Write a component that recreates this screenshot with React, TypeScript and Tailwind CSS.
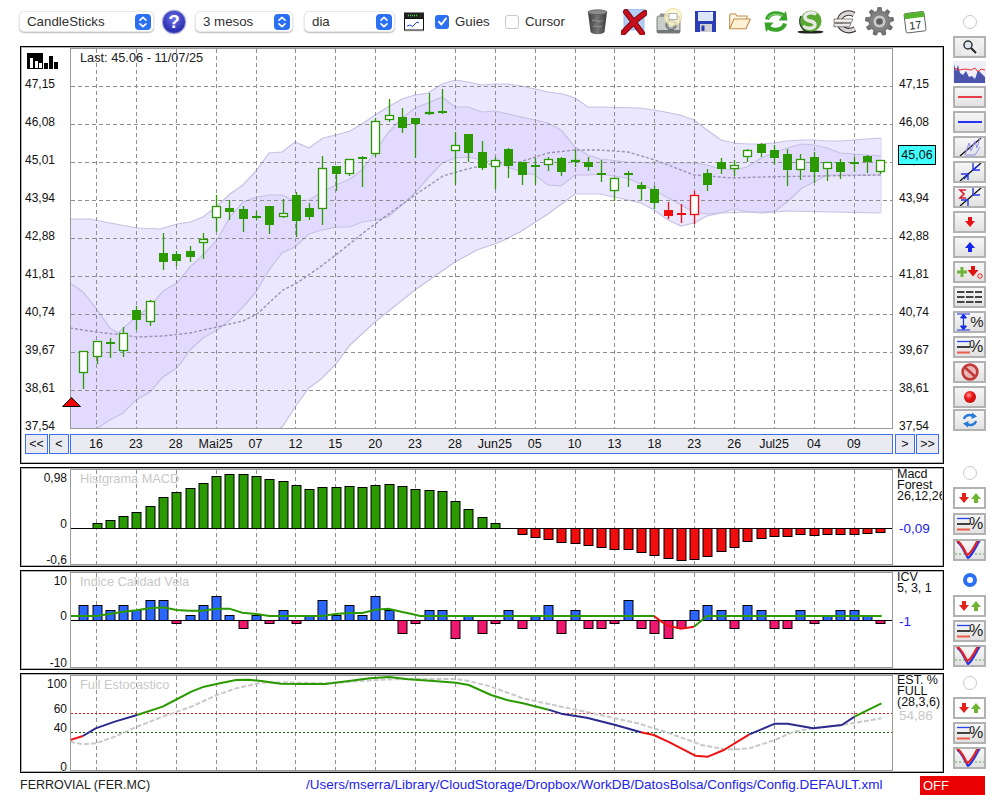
import React from "react";

type P = [number, number];
const pts = (a: P[]) => a.map((p) => `${p[0]},${p[1]}`).join(" ");
const GX = [96, 136, 176, 216, 256, 295, 335, 375, 415, 455, 495, 535, 575, 614, 654, 694, 734, 774, 814, 854];
const GY = [86, 124, 162, 200, 238, 276, 314, 352, 390];
const cx = (i: number) => 83.3 + 13.28 * i;
const GREEN = "#2a9a00";
const RED = "#f20d0d";

const aUp: P[] = [[70,219],[90,219],[110,223],[137,228],[160,229],[177,224],[190,222],[203,217],[217,206],[230,194],[243,185],[256,171],[269,153],[282,152],[295,142],[309,148],[323,138],[336,135],[350,131],[362,124],[375,115],[388,107],[402,99],[415,95],[428,93],[442,84],[455,80],[468,82],[482,85],[495,84],[508,84],[521,86],[535,89],[548,92],[563,94],[575,98],[588,107],[600,107],[640,108],[660,111],[680,115],[694,120],[707,130],[721,140],[734,143],[747,144],[761,144],[774,143],[787,141],[802,140],[814,140],[827,141],[840,141],[854,140],[867,139],[881,138]];
const aLo: P[] = [[70,445],[270,435],[283,426],[295,407],[309,388],[320,380],[335,365],[350,345],[375,322],[415,290],[455,262],[477,250],[500,242],[520,232],[548,214],[575,194],[600,194],[614,197],[628,200],[641,203],[654,210],[668,220],[681,226],[694,223],[707,216],[721,213],[734,209],[747,212],[761,213],[774,212],[787,211],[881,213]];
const bUp: P[] = [[70,283],[83,292],[96,308],[110,328],[118,333],[136,317],[150,307],[163,291],[177,283],[190,267],[203,255],[217,240],[230,217],[243,202],[257,197],[269,195],[282,195],[295,201],[309,200],[322,192],[336,185],[350,179],[362,170],[375,152],[388,133],[402,118],[415,108],[428,103],[442,97],[455,107],[468,107],[482,112],[495,111],[508,114],[521,117],[535,120],[548,123],[561,130],[575,147],[588,155],[600,159],[627,162],[655,163],[694,163],[707,165],[721,169],[734,170],[747,167],[761,158],[774,153],[787,148],[802,144],[814,145],[827,148],[840,153],[854,154],[867,155],[881,156]];
const bLo: P[] = [[70,445],[96,429],[110,420],[123,413],[136,400],[150,392],[163,377],[177,368],[190,350],[203,338],[217,330],[230,320],[243,307],[256,292],[269,270],[282,253],[295,247],[309,234],[322,230],[336,227],[350,227],[362,222],[375,220],[388,217],[402,205],[415,193],[428,178],[442,163],[455,158],[468,157],[482,160],[495,162],[508,167],[521,172],[535,175],[548,185],[561,186],[575,175],[588,175],[600,174],[627,178],[654,190],[681,205],[694,212],[707,214],[721,213],[747,212],[774,212],[787,202],[802,188],[814,182],[827,175],[881,175]];
const mean: P[] = [[70,328],[96,332],[123,335],[137,337],[163,336],[190,333],[217,327],[243,321],[257,314],[283,290],[297,283],[320,267],[342,250],[367,230],[390,213],[415,195],[443,176],[467,169],[495,163],[520,162],[548,153],[575,150],[600,150],[628,152],[655,160],[694,175],[733,178],[760,177],[881,175]];

// wickTop, bodyTop, bodyBottom, wickBottom, hollow
const C: [number, number, number, number, number][] = [
[351,351,373,389,1],[341,341,357,364,1],[338,342,344,358,0],[327,333,351,357,1],[306,310,320,330,0],[300,301,322,326,1],[233,253,262,270,0],[251,254,261,266,0],[246,251,257,262,0],[233,239,243,259,1],
[195,206,218,232,1],[200,208,212,220,0],[206,209,219,232,0],[211,216,218,220,0],[206,206,225,234,0],[199,213,217,218,1],[192,195,221,237,0],[203,208,217,220,0],[156,168,209,225,1],[166,166,174,191,0],
[159,159,174,176,1],[156,157,159,187,0],[118,121,154,157,1],[99,115,120,122,1],[108,117,128,133,0],[118,118,124,158,0],[93,112,114,115,1],[89,111,113,114,0],[132,145,151,185,1],[134,134,153,162,0],
[141,152,168,170,0],[157,160,167,189,1],[148,149,166,178,0],[162,162,175,185,0],[158,165,167,185,0],[157,159,165,171,1],[157,158,172,176,0],[150,160,162,167,1],[157,162,167,171,0],[160,173,175,182,0],
[178,178,191,201,1],[171,173,175,187,0],[182,185,189,200,0],[186,189,203,209,0],[202,210,216,219,0],[204,213,215,223,0],[191,195,215,224,1],[169,173,185,191,0],[158,162,169,174,0],[160,165,169,176,1],
[149,150,157,162,1],[143,144,153,157,0],[145,150,158,165,0],[149,154,170,186,0],[154,159,170,180,1],[152,157,172,183,0],[162,162,169,181,1],[159,162,172,179,0],[157,162,164,172,0],[155,156,162,173,0],
[160,160,172,174,1],
];

const macdPos: number[] = [175,166,154,142,124,97,82,70,55,34,28,28,34,43,49,61,73,67,67,64,67,61,58,64,73];
const macdPos2: [number, number][] = [[26,490],[27,491],[28,501],[29,509],[30,517],[31,523]];
const macdNeg: number[] = [208,217,223,232,235,241,247,253,253,262,271,280,286,283,274,259,247,229,220,214,214,208,211,208,208,208,205,202];

// ICV bars as zoomed y: below 466 = blue top, above = pink bottom
const icv: number[] = [421,421,436,421,436,406,406,475,451,421,394,451,490,451,475,436,475,451,406,451,421,451,394,436,505,475,436,436,520,451,505,475,436,490,451,421,505,436,490,490,475,406,490,505,520,490,436,421,436,490,421,436,490,490,436,475,451,436,436,451,475];

const sigAll: P[] = [[151,453],[229,453],[268,447],[310,440],[349,436],[388,430],[430,427],[469,435],[508,437],[547,437],[589,431],[628,431],[667,443],[709,447],[748,453],[907,453],[946,447],[988,444],[1027,444],[1066,434],[1105,431],[1147,441],[1186,449],[1200,453]].map(([x, y]) => [x / 3 + 20, 465 + y / 3] as P);
const z11 = (a: P[]) => a.map(([x, y]) => [x / 3 + 500, 465 + y / 3] as P);
const z12 = (a: P[]) => a.map(([x, y]) => [x / 1.568, 665 + y / 3] as P);

const St = {
  r1: [[110,225],[130,213]] as P[],
  b1: [[130,213],[150,190],[180,170],[215,150]] as P[],
  g1: [[215,150],[255,125],[275,105],[300,80],[320,65],[345,55],[370,45],[390,44],[410,48],[440,56],[470,57],[510,57],[550,47],[580,40],[610,36],[640,43],[680,48],[715,53],[735,60],[770,90],[795,105],[820,115],[860,134]] as P[],
  b2: [[860,134],[880,146],[920,158],[965,180],[1005,202]] as P[],
  r2: [[1005,202],[1025,210],[1050,232],[1090,272],[1110,275],[1135,255],[1175,208]] as P[],
  b3: [[1175,208],[1215,176],[1235,176],[1275,190],[1320,180],[1340,155]] as P[],
  g2: [[1340,155],[1382,115]] as P[],
  gray: [[110,230],[130,238],[150,235],[180,215],[215,185],[255,155],[300,125],[340,90],[370,70],[410,53],[450,52],[510,55],[550,50],[600,44],[640,42],[715,42],[735,48],[770,65],[820,100],[880,125],[930,145],[1000,175],[1050,205],[1100,240],[1140,254],[1175,250],[1215,225],[1245,200],[1275,190],[1320,180],[1382,160]] as P[],
};

const VGrid = ({ y1, y2 }: { y1: number; y2: number }) => (
  <>
    {GX.map((x) => (
      <line key={x} x1={x + 0.5} x2={x + 0.5} y1={y1} y2={y2} stroke="#8f8f8f" strokeWidth="1" strokeDasharray="4 3" />
    ))}
  </>
);

const MainChart = () => (
  <svg width="821" height="379" viewBox="71 49 821 379" className="block overflow-hidden">
    <polygon points={pts([...aUp, ...[...aLo].reverse()])} fill="#7b5cff" fillOpacity="0.15" />
    <polygon points={pts([...bUp, ...[...bLo].reverse()])} fill="#7b5cff" fillOpacity="0.08" />
    {[aUp, aLo, bUp, bLo].map((l, i) => (
      <polyline key={i} points={pts(l)} fill="none" stroke="#c6c1e3" strokeWidth="1.2" />
    ))}
    <line x1="881" x2="881" y1="138" y2="213" stroke="#d6d2ee" strokeWidth="1" />
    <VGrid y1={49} y2={428} />
    {GY.map((y) => (
      <line key={y} x1={71} x2={892} y1={y + 0.5} y2={y + 0.5} stroke="#8f8f8f" strokeWidth="1" strokeDasharray="4 3" />
    ))}
    <polyline points={pts(mean)} fill="none" stroke="#9c93ae" strokeWidth="1.4" strokeDasharray="3 2" />
    {C.map((c, i) => {
      const x = Math.round(cx(i)) + 0.5;
      const col = i >= 44 && i <= 46 ? RED : GREEN;
      return (
        <g key={i}>
          <line x1={x} x2={x} y1={c[0]} y2={c[3]} stroke={col} strokeWidth="1.3" />
          {c[4] ? (
            <rect x={x - 4} y={c[1] + 0.5} width={8} height={c[2] - c[1] - 1} fill="#fff" stroke={col} strokeWidth="1.3" />
          ) : (
            <rect x={x - 4.5} y={c[1]} width={9} height={c[2] - c[1]} fill={col} />
          )}
        </g>
      );
    })}
  </svg>
);

const Bar = ({ x, y1, y2, fill }: { x: number; y1: number; y2: number; fill: string }) => (
  <rect x={Math.round(x) - 4} y={y1 + 0.5} width={9} height={y2 - y1} fill={fill} stroke="#000" strokeWidth="1" />
);

const MacdChart = () => (
  <svg width="821" height="94" viewBox="71 470 821 94" className="block">
    <VGrid y1={470} y2={564} />
    {macdPos.map((z, i) => (
      <Bar key={i} x={cx(i + 1)} y1={Math.round(465 + z / 3)} y2={528} fill={GREEN} />
    ))}
    {macdPos2.map(([i, y]) => (
      <Bar key={i} x={cx(i)} y1={y} y2={528} fill={GREEN} />
    ))}
    {macdNeg.map((z, i) => (
      <Bar key={i} x={cx(i + 33)} y1={528} y2={Math.round(465 + z / 3)} fill={RED} />
    ))}
    <line x1="71" x2="892" y1="528.5" y2="528.5" stroke="#000" strokeWidth="1" />
  </svg>
);

const IcvChart = () => (
  <svg width="821" height="94" viewBox="71 573 821 94" className="block">
    <VGrid y1={573} y2={667} />
    {icv.map((z, i) => {
      const y = Math.round(465 + z / 3);
      return y < 620 ? (
        <Bar key={i} x={cx(i)} y1={y} y2={620} fill="#2a66ff" />
      ) : (
        <Bar key={i} x={cx(i)} y1={620} y2={y} fill="#f0176f" />
      );
    })}
    <line x1="71" x2="892" y1="620.5" y2="620.5" stroke="#000" strokeWidth="1" />
    <polyline points={pts([...sigAll, ...z11([[0,453],[462,453]])])} fill="none" stroke={GREEN} strokeWidth="2" />
    <polyline points={pts(z11([[462,453],[483,469],[504,482],[543,491],[582,485]]))} fill="none" stroke="#ee1111" strokeWidth="2" />
    <polyline points={pts(z11([[582,485],[621,453],[1145,453]]))} fill="none" stroke={GREEN} strokeWidth="2" />
  </svg>
);

const StochChart = () => (
  <svg width="821" height="94" viewBox="71 676 821 94" className="block">
    <VGrid y1={676} y2={770} />
    <line x1="71" x2="892" y1="713.5" y2="713.5" stroke="#e01010" strokeWidth="1" strokeDasharray="2 2" />
    <line x1="71" x2="892" y1="732.5" y2="732.5" stroke="#0c6a0c" strokeWidth="1" strokeDasharray="2 2" />
    <polyline points={pts(z12(St.gray))} fill="none" stroke="#c9c9c9" strokeWidth="2" strokeDasharray="5 2" />
    {([["r1", "#ee1111"], ["b1", "#2b2a8e"], ["g1", GREEN], ["b2", "#2b2a8e"], ["r2", "#ee1111"], ["b3", "#2b2a8e"], ["g2", GREEN]] as const).map(([k, col]) => (
      <polyline key={k} points={pts(z12(St[k]))} fill="none" stroke={col} strokeWidth="2" strokeLinejoin="round" />
    ))}
  </svg>
);

/* ---------- toolbar bits ---------- */
const Stepper = () => (
  <div className="w-[16px] h-[16px] rounded-[4px] bg-[#2b6ff2] flex items-center justify-center">
    <svg width="10" height="14" viewBox="0 0 10 14" fill="none" stroke="#fff" strokeWidth="1.6" strokeLinecap="round" strokeLinejoin="round">
      <path d="M2 5.2 5 2.4l3 2.8" />
      <path d="M2 8.8l3 2.8 3-2.8" />
    </svg>
  </div>
);

const Select = ({ label, w, ml }: { label: string; w: string; ml: string }) => (
  <div className={`${w} ${ml} h-[21px] bg-white rounded-[5px] border border-[#e8e8e8] shadow-[0_1px_1.5px_rgba(0,0,0,0.28)] flex items-center justify-between pl-[7px] pr-[2px] shrink-0`}>
    <span className="text-[13.3px] text-[#303030] leading-none">{label}</span>
    <Stepper />
  </div>
);

const Check = ({ on }: { on: boolean }) =>
  on ? (
    <div className="w-[14px] h-[14px] rounded-[3px] bg-[#2b6ff2] flex items-center justify-center shrink-0">
      <svg width="11" height="11" viewBox="0 0 11 11" fill="none" stroke="#fff" strokeWidth="1.9" strokeLinecap="round" strokeLinejoin="round">
        <path d="M2 5.8l2.4 2.7L9 2.4" />
      </svg>
    </div>
  ) : (
    <div className="w-[14px] h-[14px] rounded-[3px] bg-white border border-[#c9c9c9] shrink-0" />
  );

const gearPath = (() => {
  const c = 14.5;
  const n = 9;
  let d = "";
  for (let i = 0; i < n; i++) {
    const a = (i * 2 * Math.PI) / n;
    const s = (2 * Math.PI) / n;
    const pr = (r: number, t: number) => `${(c + r * Math.sin(t)).toFixed(2)} ${(c - r * Math.cos(t)).toFixed(2)}`;
    d += `${i ? "L" : "M"}${pr(10.5, a - s * 0.32)} L${pr(14.2, a - s * 0.17)} L${pr(14.2, a + s * 0.17)} L${pr(10.5, a + s * 0.32)} `;
  }
  return d + "Z";
})();

const Trash = () => (
  <svg width="21" height="26" viewBox="0 0 21 26" className="ml-[20px] shrink-0">
    <defs>
      <linearGradient id="tg" x1="0" x2="1" y1="0" y2="0">
        <stop offset="0" stopColor="#3c3c3c" />
        <stop offset="0.5" stopColor="#777" />
        <stop offset="1" stopColor="#3a3a3a" />
      </linearGradient>
    </defs>
    <path d="M1 3 C5 0.5 16 0.5 20 3 L17.5 23 C15 26 6 26 3.5 23 Z" fill="url(#tg)" />
    <ellipse cx="10.5" cy="3.2" rx="9.5" ry="2.4" fill="#8c8c8c" stroke="#555" strokeWidth="0.7" />
    <path d="M5 12 C8 9 13 15 16 11 M6 18 C9 15 12 20 15 17" stroke="#9a9a9a" strokeWidth="1" fill="none" />
  </svg>
);

const XIcon = () => (
  <svg width="26" height="26" viewBox="0 0 26 26" className="ml-[13px] shrink-0">
    <rect x="3" y="0" width="20" height="21" fill="#b4cdf5" stroke="#8fb0e6" strokeWidth="0.8" />
    <path d="M5 3 C9 8 14 15 21 24 M24 4 C17 9 10 15 2 24" stroke="#8a0a14" strokeWidth="6" strokeLinecap="round" fill="none" />
    <path d="M5 3 C9 8 14 15 21 24 M24 4 C17 9 10 15 2 24" stroke="#c80f1d" strokeWidth="3.6" strokeLinecap="round" fill="none" />
  </svg>
);

const Camera = () => (
  <svg width="27" height="27" viewBox="0 0 27 27" className="ml-[9px] shrink-0">
    <rect x="1" y="8" width="23" height="17" rx="1.5" fill="#c9cdc9" stroke="#666" strokeWidth="0.8" />
    <rect x="4" y="5.5" width="8" height="3" fill="#8d8d8d" />
    <rect x="1" y="22" width="23" height="3" fill="#6f7a78" />
    <circle cx="15" cy="17" r="5" fill="#9aa09c" stroke="#555" strokeWidth="1" />
    <circle cx="15" cy="17" r="2.4" fill="#dfe4e0" />
    <circle cx="17" cy="9" r="8.5" fill="#fff6c8" fillOpacity="0.75" stroke="#e6e0a2" strokeWidth="1" />
    <rect x="13" y="5.5" width="8" height="6" fill="#fff" stroke="#888" strokeWidth="0.6" />
  </svg>
);

const Floppy = () => (
  <svg width="21" height="21" viewBox="0 0 21 21" className="ml-[12px] shrink-0">
    <path d="M0 0H21V21H0Z" fill="#2a3db5" />
    <rect x="3" y="1" width="15" height="9" fill="#dbe6f8" />
    <rect x="16" y="1" width="2" height="2" fill="#fff" />
    <rect x="5" y="13" width="12" height="8" fill="#d0d0d4" />
    <rect x="6.5" y="14.5" width="3" height="5.5" fill="#2a3db5" />
  </svg>
);

const Folder = () => (
  <svg width="22" height="17" viewBox="0 0 22 17" className="ml-[13px] shrink-0">
    <path d="M0.7 15.5V2.5L1.5 1H6.5L8 3H18V6" fill="#fff8e6" stroke="#c08d4a" strokeWidth="1.1" />
    <path d="M0.7 15.8 L5 6 H21.3 L17 15.8 Z" fill="#fff2d4" stroke="#c08d4a" strokeWidth="1.1" strokeLinejoin="round" />
  </svg>
);

const Recycle = () => (
  <svg width="24" height="23" viewBox="0 0 24 23" className="ml-[13px] shrink-0" fill="none">
    <path d="M3 9.5 C5 2.5 15 1.5 20 6" stroke="#3aa32a" strokeWidth="4.2" />
    <path d="M23.5 10.5 H14.5 L22 1 Z" fill="#3aa32a" />
    <path d="M21 13.5 C19 20.5 9 21.5 4 17" stroke="#3aa32a" strokeWidth="4.2" />
    <path d="M0.5 12.5 H9.5 L2 22 Z" fill="#3aa32a" />
    <path d="M4 8 C6 4 14 3 19 6" stroke="#9fe08a" strokeWidth="1" />
  </svg>
);

const SIcon = () => (
  <svg width="27" height="24" viewBox="0 0 27 24" className="ml-[9px] shrink-0">
    <ellipse cx="13.5" cy="22" rx="13" ry="1.6" fill="#222" />
    <circle cx="14" cy="11" r="10.5" fill="#5aa832" />
    <path d="M19 4.5 C15 1 7 3 8 8 C9 12 18 10 18 14.5 C18 19 10 19.5 6 16" fill="none" stroke="#e8e8e8" strokeWidth="3.4" />
    <path d="M4 6 C1 12 4 19 9 21" fill="none" stroke="#234d12" strokeWidth="1.5" />
  </svg>
);

const Euro = () => (
  <svg width="25" height="24" viewBox="0 0 25 24" className="ml-[9px] shrink-0" fill="none">
    <path d="M21 4.5 C15 1 7 4 6.5 11.5 C6.2 19 14 23 22 19" stroke="#3f3636" strokeWidth="5.6" />
    <path d="M21 4.5 C15 1 7 4 6.5 11.5 C6.2 19 14 23 22 19" stroke="#d9d6d6" strokeWidth="3.4" />
    <path d="M1 9H20L18.5 12.4H1Z" fill="#f2f2f2" stroke="#5d5353" strokeWidth="0.7" />
    <path d="M1 13.4H18L16.5 16.8H1Z" fill="#e9e9e9" stroke="#5d5353" strokeWidth="0.7" />
  </svg>
);

const Gear = () => (
  <svg width="29" height="29" viewBox="0 0 29 29" className="ml-[7px] shrink-0">
    <defs>
      <radialGradient id="gg">
        <stop offset="0" stopColor="#a0a0a0" />
        <stop offset="1" stopColor="#6c6c6c" />
      </radialGradient>
    </defs>
    <path d={gearPath} fill="url(#gg)" stroke="#4c4c4c" strokeWidth="0.6" strokeLinejoin="round" />
    <circle cx="14.5" cy="14.5" r="6.6" fill="#c8c8c8" stroke="#666" strokeWidth="0.7" />
    <circle cx="14.5" cy="14.5" r="3.3" fill="#5f5f5f" />
  </svg>
);

const Calendar = () => (
  <svg width="24" height="24" viewBox="0 0 24 24" className="ml-[9px] shrink-0">
    <g transform="rotate(-7 12 12)">
      <rect x="2" y="2.5" width="20" height="19.5" rx="1.5" fill="#fff" stroke="#444" strokeWidth="0.8" />
      <path d="M2 8V4a1.5 1.5 0 0 1 1.5-1.5h17A1.5 1.5 0 0 1 22 4v4Z" fill="#56b330" />
      <text x="12" y="19" textAnchor="middle" fontSize="11" fontWeight="500" fill="#222" fontFamily="'Liberation Sans', sans-serif">17</text>
    </g>
  </svg>
);

const MiniChart = () => (
  <svg width="20" height="20" viewBox="0 0 20 20" className="ml-[9px] shrink-0">
    <rect x="0" y="0" width="20" height="20" fill="#e8e8e8" />
    <rect x="0" y="0.5" width="20" height="6" fill="#222" />
    <path d="M4 3.5h10" stroke="#3fdc3f" strokeWidth="1.4" strokeDasharray="1 1" />
    <rect x="0.5" y="6.5" width="19" height="11.5" fill="#fff" stroke="#111" strokeWidth="1" />
    <path d="M3 14l3-1 2.5 1.5L13 10l2 1" stroke="#2140d8" strokeWidth="1" fill="none" />
  </svg>
);

const Toolbar = () => (
  <div className="h-[46px] flex items-center pl-[19px] pb-[3px] shrink-0">
    <Select label="CandleSticks" w="w-[135px]" ml="" />
    <div className="ml-[8px] w-[24px] h-[24px] rounded-full bg-[radial-gradient(circle_at_50%_35%,#6d6fe8,#2b2fb0_70%,#5a60c8)] border border-[#8f93d8] shadow-[0_0_1px_rgba(0,0,0,.5)] flex items-center justify-center text-white font-bold text-[19px] leading-none shrink-0">?</div>
    <Select label="3 mesos" w="w-[98px]" ml="ml-[9px]" />
    <Select label="dia" w="w-[91px]" ml="ml-[11px]" />
    <MiniChart />
    <div className="ml-[11px]"><Check on /></div>
    <span className="ml-[6px] w-[36px] text-[13.3px] text-[#303030] shrink-0">Guies</span>
    <div className="ml-[14px]"><Check on={false} /></div>
    <span className="ml-[6px] w-[42px] text-[13.3px] text-[#303030] shrink-0">Cursor</span>
    <Trash />
    <XIcon />
    <Camera />
    <Floppy />
    <Folder />
    <Recycle />
    <SIcon />
    <Euro />
    <Gear />
    <Calendar />
  </div>
);

/* ---------- side buttons ---------- */
const Btn = ({ children, white, extra = "" }: { children?: React.ReactNode; white?: boolean; extra?: string }) => (
  <div className={`w-[33px] h-[22px] ${extra} shrink-0 border-2 border-[#b2b2b2] ${white ? "bg-white" : "bg-[linear-gradient(#f6f6f6,#e2e2e2)]"} flex items-center justify-center overflow-hidden`}>
    {children}
  </div>
);
const S = ({ children }: { children: React.ReactNode }) => (
  <svg width="29" height="18" viewBox="0 0 29 18" className="block">{children}</svg>
);
const DownA = ({ x, y, c }: { x: number; y: number; c: string }) => (
  <path transform={`translate(${x} ${y})`} d="M3 0H7V4H10L5 10L0 4H3Z" fill={c} />
);
const UpA = ({ x, y, c }: { x: number; y: number; c: string }) => (
  <path transform={`translate(${x} ${y})`} d="M5 0L10 6H7V10H3V6H0Z" fill={c} />
);
const LinesPct = () => (
  <S>
    <path d="M2 3.5H15" stroke="#2246f0" strokeWidth="1.3" />
    <path d="M2 9H15" stroke="#222" strokeWidth="1.7" />
    <path d="M2 14.5H15" stroke="#ea5a48" strokeWidth="2" />
    <text x="21" y="14" textAnchor="middle" fontSize="16" fill="#222" fontFamily="'Liberation Sans', sans-serif">%</text>
  </S>
);
const ArrowsBtn = () => (
  <Btn white>
    <S>
      <DownA x={4} y={4} c="#e3221c" />
      <UpA x={16} y={4} c="#6fb532" />
    </S>
  </Btn>
);
const VChart = () => (
  <Btn>
    <S>
      <path d="M0 13H29" stroke="#3b9a3b" strokeWidth="0.8" strokeDasharray="2 2" />
      <path d="M2 1C6 2 10 12 13 17C17 15 21 5 25 -1" stroke="#2438e8" strokeWidth="2.2" fill="none" />
      <path d="M1 -1C6 1 9 8 12 14C16 13 19 6 23 -1" stroke="#e52222" strokeWidth="2.2" fill="none" />
    </S>
  </Btn>
);
const Radio = ({ on, mt }: { on?: boolean; mt: string }) => (
  <div className={`${mt} w-[33px] flex justify-center shrink-0`}>
    {on ? (
      <div className="w-[14px] h-[14px] rounded-full border-[4px] border-[#2b6ff2] bg-white" />
    ) : (
      <div className="w-[14px] h-[14px] rounded-full border border-[#c8c8c8] bg-white" />
    )}
  </div>
);
const DiagBase = () => <path d="M5 18L26 0" stroke="#111" strokeWidth="1.3" />;

const SideColumn = () => (
  <div className="w-[52px] pl-[5px] flex flex-col shrink-0">
    <Radio mt="mt-[15px]" />
    <div className="mt-[7px] flex flex-col gap-[3px]">
      <Btn>
        <svg width="18" height="16" viewBox="0 0 18 16" fill="none">
          <rect x="0" y="0" width="18" height="16" fill="#ededed" />
          <circle cx="7" cy="6" r="4" fill="#dfe6ee" stroke="#333" strokeWidth="1.5" />
          <path d="M10 9l5 5" stroke="#222" strokeWidth="2" />
        </svg>
      </Btn>
      <div className="w-[33px] h-[22px] shrink-0 overflow-hidden">
        <svg width="33" height="22" viewBox="0 0 33 22" className="block">
          <rect width="33" height="22" fill="#f0eef6" />
          <path d="M1 22V3L3 10 5 4 7 12 10 14 13 10 16 16 19 15 22 18 25 9 28 12 32 16V22Z" fill="#4b55ad" />
          <path d="M1 7L6 9 12 8 18 9 22 7 25 11 28 8 32 9" stroke="#e33" strokeWidth="1" fill="none" />
        </svg>
      </div>
      <Btn><S><path d="M3 9H27" stroke="#e43f4a" strokeWidth="2" /></S></Btn>
      <Btn><S><path d="M3 9H27" stroke="#2233f2" strokeWidth="2" /></S></Btn>
      <Btn>
        <S>
          <DiagBase />
          <path d="M10 17L14 5 16 13 20 3 22 10 25 0M10 17H20L25 9" stroke="#8f8ff2" strokeWidth="1" fill="none" />
        </S>
      </Btn>
      <Btn>
        <S>
          <DiagBase />
          <path d="M6 11H13V17M14 11L9 16" stroke="#2438e8" strokeWidth="1.4" fill="none" />
          <path d="M18 0V7H25M18 7L24 2" stroke="#2438e8" strokeWidth="1.4" fill="none" />
        </S>
      </Btn>
      <Btn>
        <S>
          <DiagBase />
          <path d="M6 12H13V18" stroke="#2438e8" strokeWidth="1.4" fill="none" />
          <path d="M18 0V7H25" stroke="#2438e8" strokeWidth="1.4" fill="none" />
          <path d="M11 2H5L9 6 5 10H11" stroke="#d81e2a" strokeWidth="1.6" fill="none" />
        </S>
      </Btn>
      <Btn><S><DownA x={10} y={4} c="#e80f14" /></S></Btn>
      <Btn><S><UpA x={10} y={4} c="#1626e8" /></S></Btn>
      <Btn>
        <S>
          <path d="M7 4V14M2 9H12" stroke="#6fb53a" strokeWidth="3" />
          <path transform="translate(13 3)" d="M3 0H7V4H10.5L5 10.5L-0.5 4H3Z" fill="#dd1414" />
          <circle cx="25" cy="13" r="2.2" fill="none" stroke="#dd2222" strokeWidth="1" />
        </S>
      </Btn>
      <Btn>
        <S>
          {[4, 9, 14].map((y) => (
            <path key={y} d={`M2 ${y}H27`} stroke="#444" strokeWidth="2" strokeDasharray="7.5 1.5" />
          ))}
        </S>
      </Btn>
      <Btn>
        <S>
          <path d="M2 1H15M2 17H15M8.5 2V16" stroke="#1a2ee8" strokeWidth="1.2" />
          <path d="M5.5 5L8.5 1 11.5 5ZM5.5 13L8.5 17 11.5 13Z" fill="#1a2ee8" stroke="#1a2ee8" strokeWidth="1" />
          <text x="22" y="14" textAnchor="middle" fontSize="15" fill="#222" fontFamily="'Liberation Sans', sans-serif">%</text>
        </S>
      </Btn>
      <Btn><LinesPct /></Btn>
      <Btn>
        <svg width="20" height="18" viewBox="0 0 20 18" fill="none">
          <circle cx="10" cy="9" r="7.4" fill="#e8b8b8" stroke="#c23a3a" strokeWidth="2.6" />
          <path d="M5 4.5L15 13.5" stroke="#c23a3a" strokeWidth="2.6" />
        </svg>
      </Btn>
      <Btn>
        <svg width="14" height="14" viewBox="0 0 14 14">
          <defs>
            <radialGradient id="rg" cx="0.4" cy="0.35">
              <stop offset="0" stopColor="#ff9a9a" />
              <stop offset="0.6" stopColor="#f01c1c" />
              <stop offset="1" stopColor="#d01212" />
            </radialGradient>
          </defs>
          <circle cx="7" cy="7" r="6" fill="url(#rg)" />
        </svg>
      </Btn>
      <Btn extra="-mt-[2px]">
        <svg width="18" height="18" viewBox="0 0 18 18" fill="none">
          <path d="M3 8C4 4 9 3 12 5" stroke="#2a7ad8" strokeWidth="2.4" />
          <path d="M11 1.5L16 5.5 10.5 8Z" fill="#2a7ad8" />
          <path d="M15 10C14 14 9 15 6 13" stroke="#2a7ad8" strokeWidth="2.4" />
          <path d="M7 16.5L2 12.5 7.5 10Z" fill="#2a7ad8" />
        </svg>
      </Btn>
    </div>
    <Radio mt="mt-[35px]" />
    <div className="mt-[7px] flex flex-col gap-[4px]">
      <ArrowsBtn />
      <Btn><LinesPct /></Btn>
      <VChart />
    </div>
    <Radio on mt="mt-[12px]" />
    <div className="mt-[8px] flex flex-col gap-[3px]">
      <ArrowsBtn />
      <Btn><LinesPct /></Btn>
      <VChart />
    </div>
    <Radio mt="mt-[9px]" />
    <div className="mt-[7px] flex flex-col gap-[3px]">
      <ArrowsBtn />
      <Btn><LinesPct /></Btn>
      <VChart />
    </div>
  </div>
);

/* ---------- chart panels ---------- */
const NavBtn = ({ t, w, ml }: { t: string; w: string; ml: string }) => (
  <div className={`${w} ${ml} h-[20px] border border-[#3d6ef2] bg-[#e9ebf1] flex items-center justify-center text-[12.5px] leading-none text-[#111] shrink-0`}>{t}</div>
);

const Y_LEFT = ["47,15", "46,08", "45,01", "43,94", "42,88", "41,81", "40,74", "39,67", "38,61", "37,54"];
const DATES = ["16", "23", "28", "Mai25", "07", "12", "15", "20", "23", "28", "Jun25", "05", "10", "13", "18", "23", "26", "Jul25", "04", "09"];

const AxisCol = ({ className }: { className: string }) => (
  <div className={`${className} pt-[17px] flex flex-col shrink-0`}>
    {Y_LEFT.map((v) => (
      <div key={v} className="h-[38px] flex items-center text-[12px] leading-none text-[#111] shrink-0">{v}</div>
    ))}
  </div>
);

const PANEL_FRAME = "border border-black p-[1px] shadow-[inset_0_0_0_1px_rgba(0,0,0,0.3)]";

const MainPanel = () => (
  <div className={`relative ml-[20px] w-[924px] h-[418px] ${PANEL_FRAME} flex flex-col shrink-0`}>
    <div className="flex h-[381px] shrink-0">
      <AxisCol className="w-[48px] pl-[3px]" />
      <div className="relative w-[823px] h-[381px] border border-[#999] shrink-0">
        <MainChart />
        <span className="absolute left-[9px] top-[2px] text-[12.75px] leading-[14px] text-[#222]">Last: 45.06 - 11/07/25</span>
        <svg className="absolute left-[-9px] top-[348px] overflow-visible" width="19" height="10" viewBox="0 0 19 10">
          <path d="M9.5 0.5L18.5 9.5H0.5Z" fill="#f00000" stroke="#000" strokeWidth="1" />
        </svg>
      </div>
      <div className="relative">
        <AxisCol className="w-[49px] pl-[6px]" />
        <div className="absolute left-[5px] top-[97px] w-[38px] h-[20px] bg-[#40ffff] border border-black flex items-center justify-center text-[12.5px] leading-none text-[#111]">45,06</div>
      </div>
    </div>
    <div className="flex mt-[5px]">
      <NavBtn t="<<" w="w-[23px]" ml="ml-[3px]" />
      <NavBtn t="<" w="w-[20px]" ml="ml-[1px]" />
      <div className="ml-[1px] w-[823px] h-[20px] border border-[#3d6ef2] bg-[#e9ebf1] flex items-center pl-[5px] shrink-0">
        {DATES.map((d, i) => (
          <span key={i} className="w-[39.9px] text-center text-[12.5px] leading-none text-[#111] shrink-0">{d}</span>
        ))}
      </div>
      <NavBtn t=">" w="w-[20px]" ml="ml-[2px]" />
      <NavBtn t=">>" w="w-[23px]" ml="ml-[1px]" />
    </div>
    <svg className="absolute left-[6px] top-[6px]" width="32" height="16" viewBox="0 0 32 16">
      <rect x="0" y="0" width="16" height="16" fill="#000" />
      <rect x="3" y="5" width="3" height="10" fill="#fff" />
      <rect x="8" y="8" width="3" height="7" fill="#fff" />
      <rect x="12" y="10" width="3" height="5" fill="#fff" />
      <rect x="17" y="10" width="4" height="6" fill="#000" />
      <rect x="22" y="3" width="4" height="13" fill="#000" />
      <rect x="27" y="9" width="4" height="7" fill="#000" />
    </svg>
  </div>
);

const LabelL = ({ t, mt }: { t: string; mt: string }) => (
  <div className={`${mt} h-[12px] text-right text-[12px] leading-[12px] text-[#111]`}>{t}</div>
);

const SubPanel = ({ title, left, right, chart }: { title: string; left: React.ReactNode; right: React.ReactNode; chart: React.ReactNode }) => (
  <div className={`ml-[20px] mt-[3px] w-[924px] h-[100px] ${PANEL_FRAME} flex shrink-0`}>
    <div className="w-[45px] flex flex-col shrink-0">{left}</div>
    <div className="ml-[3px] relative w-[823px] h-[96px] border border-[#999] shrink-0">
      {chart}
      <span className="absolute left-[9px] top-[2px] text-[12.75px] leading-[14px] text-[#c8c8c8]">{title}</span>
    </div>
    <div className="w-[49px] pl-[4px] flex flex-col text-[12.5px] leading-[11px] text-[#111] overflow-x-clip whitespace-nowrap shrink-0">{right}</div>
  </div>
);

const Left = () => (
  <div className="w-[948px] flex flex-col shrink-0">
    <Toolbar />
    <MainPanel />
    <SubPanel
      title="Histgrama MACD"
      chart={<MacdChart />}
      left={<><LabelL t="0,98" mt="mt-[3px]" /><LabelL t="0" mt="mt-[34px]" /><LabelL t="-0,6" mt="mt-[24px]" /></>}
      right={<><div>Macd</div><div>Forest</div><div>26,12,26</div><div className="mt-[21px] pl-[2px] text-[13.5px] text-[#2222ee]">-0,09</div></>}
    />
    <SubPanel
      title="Indice Calidad Vela"
      chart={<IcvChart />}
      left={<><LabelL t="10" mt="mt-[3px]" /><LabelL t="0" mt="mt-[23px]" /><LabelL t="-10" mt="mt-[35px]" /></>}
      right={<><div>ICV</div><div>5, 3, 1</div><div className="mt-[22px] pl-[2px] text-[13.5px] text-[#2222ee]">-1</div></>}
    />
    <SubPanel
      title="Full Estocastico"
      chart={<StochChart />}
      left={<><LabelL t="100" mt="mt-[3px]" /><LabelL t="60" mt="mt-[13px]" /><LabelL t="40" mt="mt-[7px]" /><LabelL t="0" mt="mt-[27px]" /></>}
      right={<><div>EST. %</div><div>FULL</div><div>(28,3,6)</div><div className="mt-[2px] pl-[2px] text-[13.5px] text-[#c8c8c8]">54,86</div></>}
    />
  </div>
);

export default function App() {
  return (
    <div className="w-[1000px] h-[800px] bg-white overflow-hidden flex flex-col font-['Liberation_Sans',sans-serif]">
      <div className="flex h-[773px] shrink-0">
        <Left />
        <SideColumn />
      </div>
      <div className="h-[27px] pl-[20px] pb-[3px] flex items-center shrink-0">
        <span className="w-[286px] text-[12.5px] text-[#222] shrink-0">FERROVIAL (FER.MC)</span>
        <span className="w-[614px] text-[13.5px] text-[#2222ee] whitespace-nowrap shrink-0">/Users/mserra/Library/CloudStorage/Dropbox/WorkDB/DatosBolsa/Configs/Config.DEFAULT.xml</span>
        <div className="w-[65px] h-[19px] bg-[#ea0000] text-white text-[13px] leading-[19px] pl-[3px] shrink-0">OFF</div>
      </div>
    </div>
  );
}
